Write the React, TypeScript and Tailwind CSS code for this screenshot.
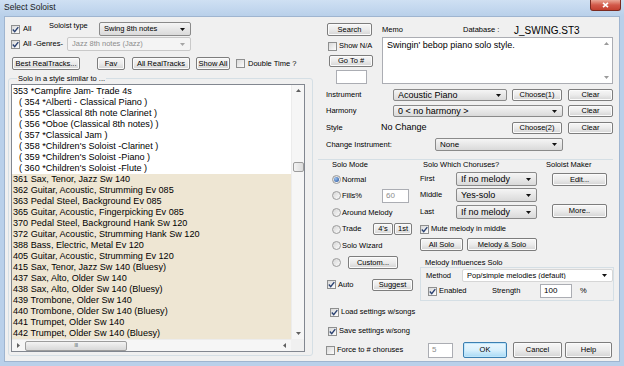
import React from 'react';

// Select Soloist dialog (Win7 look)

const Btn = ({ label, className = '', def = false }: { label: string; className?: string; def?: boolean }) => (
  <button
    type="button"
    className={`flex items-center justify-center shrink-0 rounded-[2px] border leading-none ${
      def
        ? 'border-[#3c7fb1] bg-linear-to-b from-[#eaf6fd] via-[#d9f0fc] to-[#a7d9f5] shadow-[inset_0_0_0_1px_#bfe6fb]'
        : 'border-[#7d7d7d] bg-linear-to-b from-[#f7f7f7] via-[#ebebeb] to-[#d4d4d4] shadow-[inset_0_0_0_1px_#fbfbfb]'
    } ${className}`}
  >
    {label}
  </button>
);

const Check = ({ on = false }: { on?: boolean }) => (
  <span className="w-[9px] h-[9px] shrink-0 border border-[#8e8f8f] bg-linear-to-br from-[#d9d9d9] to-[#fdfdfd] flex items-center justify-center">
    {on && (
      <svg width="7" height="7" viewBox="0 0 7 7">
        <path d="M0.8 3.5 L2.7 5.6 L6.3 1.1" fill="none" stroke="#2b4272" strokeWidth="1.4" />
      </svg>
    )}
  </span>
);

const Radio = ({ on = false }: { on?: boolean }) => (
  <span className="w-[9px] h-[9px] shrink-0 rounded-full border border-[#9c9c9c] bg-linear-to-br from-[#d6d6d6] to-[#fbfbfb] flex items-center justify-center">
    {on && <span className="w-[5px] h-[5px] rounded-full bg-[radial-gradient(circle_at_35%_35%,#9cc2ef,#1d4c98)]" />}
  </span>
);

const Arrow = ({ color = '#111' }: { color?: string }) => (
  <svg width="5" height="3" viewBox="0 0 5 3" className="shrink-0">
    <path d="M0 0 H5 L2.5 3 Z" fill={color} />
  </svg>
);

type ComboKind = 'btn' | 'white' | 'off';

const Combo = ({ text, className = '', kind = 'btn', size = 'text-[9px]' }: { text: string; className?: string; kind?: ComboKind; size?: string }) => (
  <div
    className={`flex items-center shrink-0 rounded-[2px] border pl-[4px] pr-[5px] ${
      kind === 'btn'
        ? 'border-[#8a8a8a] bg-linear-to-b from-[#f5f5f5] to-[#dadada]'
        : kind === 'white'
          ? 'border-[#d6d6d6] bg-white'
          : 'border-[#c9c9c9] bg-[#f4f4f4] text-[#8d8d8d]'
    } ${className}`}
  >
    <span className={`flex-1 truncate leading-none ${size}`}>{text}</span>
    <Arrow color={kind === 'off' ? '#a5a5a5' : '#111'} />
  </div>
);

const Field = ({ text = '', className = '', muted = false }: { text?: string; className?: string; muted?: boolean }) => (
  <div className={`shrink-0 flex items-center bg-white border border-[#abadb3] pl-[3px] text-[8px] ${muted ? 'text-[#8d8d8d]' : ''} ${className}`}>
    {text}
  </div>
);

const whiteItems = [
  '353 *Campfire Jam- Trade 4s',
  '( 354 *Alberti - Classical Piano )',
  '( 355 *Classical 8th note Clarinet )',
  '( 356 *Oboe (Classical 8th notes) )',
  '( 357 *Classical Jam )',
  "( 358 *Children's Soloist -Clarinet )",
  "( 359 *Children's Soloist -Piano )",
  "( 360 *Children's Soloist -Flute )",
];

const tanItems = [
  '361 Sax, Tenor, Jazz Sw 140',
  '362 Guitar, Acoustic, Strumming Ev 085',
  '363 Pedal Steel, Background Ev 085',
  '365 Guitar, Acoustic, Fingerpicking Ev 085',
  '370 Pedal Steel, Background Hank Sw 120',
  '372 Guitar, Acoustic, Strumming Hank Sw 120',
  '388 Bass, Electric, Metal Ev 120',
  '405 Guitar, Acoustic, Strumming Ev 120',
  '415 Sax, Tenor, Jazz Sw 140 (Bluesy)',
  '437 Sax, Alto, Older Sw 140',
  '438 Sax, Alto, Older Sw 140 (Bluesy)',
  '439 Trombone, Older Sw 140',
  '440 Trombone, Older Sw 140 (Bluesy)',
  '441 Trumpet, Older Sw 140',
  '442 Trumpet, Older Sw 140 (Bluesy)',
];

const RadioRow = ({ on = false, children }: { on?: boolean; children?: React.ReactNode }) => (
  <div className="h-[16.6px] pl-[14px] flex items-center">
    <Radio on={on} />
    {children}
  </div>
);

export default function App() {
  return (
    <div className="w-[624px] h-[366px] flex flex-col overflow-hidden bg-[#b9d0ea] font-['Liberation_Sans',Arial,sans-serif] text-[7.5px] text-black">
      {/* title bar */}
      <div className="h-[16px] shrink-0 flex items-start justify-between bg-linear-to-b from-[#cfe0f3] to-[#b9d0ea]">
        <span className="ml-[4px] mt-[3px] text-[8.5px] leading-[9px] text-[#1a1a1a]">Select Soloist</span>
        <div className="mr-[3px] w-[31px] h-[11px] rounded-b-[3px] border border-t-0 border-[#7b2a20] bg-linear-to-b from-[#e9a797] via-[#d2594a] to-[#c3402f] flex items-center justify-center">
          <svg width="7" height="6" viewBox="0 0 7 6">
            <path d="M1 0.8 L6 5.2 M6 0.8 L1 5.2" stroke="#fff" strokeWidth="1.6" />
          </svg>
        </div>
      </div>

      {/* client area */}
      <div className="flex-1 mx-[4px] mb-[4px] flex bg-[#f0f0f0] border border-[#9fb5d0]">
        {/* left column */}
        <div className="w-[310px] shrink-0 flex flex-col">
          <div className="mt-[5px] h-[14px] flex items-center">
            <div className="w-[44px] pl-[6px] flex items-center">
              <Check on />
              <span className="ml-[3px]">All</span>
            </div>
            <span className="w-[50px] self-start -mt-[1px] leading-[9px]">Soloist type</span>
            <Combo text="Swing 8th notes" className="w-[92px] h-[14px]" size="text-[7.5px]" />
          </div>
          <div className="mt-[1px] h-[14px] flex items-center">
            <div className="w-[62px] pl-[6px] flex items-center">
              <Check on />
              <span className="ml-[3px]">All -Genres-</span>
            </div>
            <Combo text="Jazz 8th notes (Jazz)" kind="off" className="w-[124px] h-[14px]" size="text-[7.5px]" />
          </div>
          <div className="mt-[6px] h-[13px] flex items-center">
            <Btn label="Best RealTracks..." className="ml-[7px] w-[68px] h-[13px]" />
            <Btn label="Fav" className="ml-[17px] w-[28px] h-[13px]" />
            <Btn label="All RealTracks" className="ml-[7px] w-[58px] h-[13px]" />
            <Btn label="Show All" className="ml-[6px] w-[34px] h-[13px]" />
            <span className="ml-[6px]"><Check /></span>
            <span className="ml-[3px]">Double Time ?</span>
          </div>

          {/* group: solo in a style similar to */}
          <div className="mt-[8px] ml-[3px] w-[305px] h-[278px] border border-[#d5dfe5] rounded-[3px]">
            <div className="-mt-[5px] ml-[8px] px-[1px] w-fit leading-[9px] bg-[#f0f0f0]">Solo in a style similar to ...</div>
            <div className="mt-[1px] ml-[2px] w-[294px] h-[268px] border border-[#828790] bg-white flex flex-col">
              <div className="h-[254px] flex">
                <div className="w-[279px] pt-[1px] text-[9.1px]">
                  {whiteItems.map((t, i) => (
                    <div key={t} className={`h-[11px] leading-[11px] whitespace-nowrap ${i === 0 ? 'pl-[1px]' : 'pl-[7px]'}`}>{t}</div>
                  ))}
                  {tanItems.map((t) => (
                    <div key={t} className="h-[11px] leading-[11px] pl-[1px] whitespace-nowrap bg-[#eee6d3]">{t}</div>
                  ))}
                </div>
                <div className="w-[13px] flex flex-col items-center bg-[#f6f6f6] border-l border-[#ececec]">
                  <div className="h-[12px] flex items-center justify-center rotate-180"><Arrow color="#606060" /></div>
                  <div className="mt-[65px] w-[11px] h-[10px] rounded-[2px] border border-[#9c9c9c] bg-linear-to-r from-[#f3f3f3] to-[#dcdcdc]" />
                  <div className="flex-1" />
                  <div className="h-[12px] flex items-center justify-center"><Arrow color="#606060" /></div>
                </div>
              </div>
              <div className="h-[12px] flex">
                <div className="w-[279px] flex items-center bg-[#f6f6f6] border-t border-[#ececec]">
                  <div className="w-[13px] flex justify-center"><span className="-rotate-90 flex"><Arrow color="#606060" /></span></div>
                  <div className="w-[102px] h-[10px] rounded-[2px] border border-[#9c9c9c] bg-linear-to-b from-[#f3f3f3] to-[#d8d8d8] flex items-center justify-center text-[6px] tracking-[-0.5px] text-[#707070]">III</div>
                  <div className="flex-1" />
                  <div className="w-[13px] flex justify-center"><span className="rotate-90 flex"><Arrow color="#606060" /></span></div>
                </div>
                <div className="flex-1 bg-[#f0f0f0]" />
              </div>
            </div>
          </div>
        </div>

        {/* right column */}
        <div className="flex-1 flex flex-col pl-[3px]">
          <div className="mt-[6px] flex items-start">
            <div className="ml-[9px] w-[46px] flex flex-col">
              <Btn label="Search" className="w-[45px] h-[13px]" />
              <div className="mt-[5px] h-[10px] flex items-center">
                <span className="ml-[1px]"><Check /></span>
                <span className="ml-[2px]">Show N/A</span>
              </div>
              <Btn label="Go To #" className="mt-[4px] ml-[2px] w-[44px] h-[12px]" />
              <Field className="mt-[3px] ml-[9px] w-[31px] h-[14px]" />
            </div>
            <div className="ml-[9px] w-[231px] flex flex-col">
              <div className="h-[14px] flex items-center">
                <span className="w-[81px]">Memo</span>
                <span className="w-[51px]">Database :</span>
                <span className="text-[10px]">J_SWING.ST3</span>
              </div>
              <div className="h-[47px] flex bg-white border border-[#abadb3]">
                <div className="flex-1 pl-[4px] pt-[2px] text-[9px] leading-[11px]">Swingin' bebop piano solo style.</div>
                <div className="w-[12px] flex flex-col items-center justify-between py-[4px]">
                  <span className="rotate-180 flex"><Arrow color="#9a9a9a" /></span>
                  <Arrow color="#9a9a9a" />
                </div>
              </div>
            </div>
          </div>

          {/* instrument rows */}
          <div className="mt-[5px] h-[12px] flex items-center">
            <span className="ml-[8px] w-[67px]">Instrument</span>
            <Combo text="Acoustic Piano" className="w-[114px] h-[12px]" />
            <Btn label="Choose(1)" className="ml-[5px] w-[50px] h-[12px]" />
            <Btn label="Clear" className="ml-[6px] w-[45px] h-[12px]" />
          </div>
          <div className="mt-[4px] h-[12px] flex items-center">
            <span className="ml-[8px] w-[67px]">Harmony</span>
            <Combo text="0 < no harmony >" className="w-[170px] h-[12px]" />
            <Btn label="Clear" className="ml-[5px] w-[45px] h-[12px]" />
          </div>
          <div className="mt-[5px] h-[12px] flex items-center">
            <span className="ml-[8px] w-[55px]">Style</span>
            <span className="w-[131px] text-[9px]">No Change</span>
            <Btn label="Choose(2)" className="w-[50px] h-[12px]" />
            <Btn label="Clear" className="ml-[6px] w-[45px] h-[12px]" />
          </div>
          <div className="mt-[4px] h-[13px] flex items-center">
            <span className="ml-[8px] w-[109px]">Change Instrument:</span>
            <Combo text="None" className="w-[128px] h-[13px]" size="text-[8px]" />
          </div>
          <div className="mt-[8px] w-[295px] h-px bg-[#d5dfe5]" />

          {/* lower section */}
          <div className="flex">
            <div className="w-[98px] flex flex-col">
              <div className="h-[10px] pl-[14px] flex items-center">Solo Mode</div>
              <div className="mt-[1px]">
                <RadioRow on><span className="ml-[1px]">Normal</span></RadioRow>
                <RadioRow>
                  <span className="ml-[1px] w-[40px]">Fills%</span>
                  <Field text="60" muted className="w-[27px] h-[14px]" />
                </RadioRow>
                <RadioRow><span className="ml-[1px]">Around Melody</span></RadioRow>
                <RadioRow>
                  <span className="ml-[1px] w-[30px]">Trade</span>
                  <Btn label="4's" className="ml-[1px] w-[20px] h-[12px]" />
                  <Btn label="1st" className="ml-[1px] w-[18px] h-[12px]" />
                </RadioRow>
                <RadioRow><span className="ml-[1px]">Solo Wizard</span></RadioRow>
                <RadioRow>
                  <Btn label="Custom..." className="ml-[7px] w-[50px] h-[13px]" />
                </RadioRow>
              </div>
              <div className="mt-[8.4px] h-[12px] pl-[9px] flex items-center">
                <Check on />
                <span className="ml-[2px] w-[34px]">Auto</span>
                <Btn label="Suggest" className="w-[41px] h-[12px]" />
              </div>
            </div>

            <div className="w-[198px] flex flex-col">
              <div className="flex">
                <div className="w-[125px] flex flex-col">
                  <div className="h-[10px] pl-[7px] flex items-center">Solo Which Choruses?</div>
                  <div className="mt-[2px] h-[14px] pl-[4px] flex items-center">
                    <span className="w-[36px]">First</span>
                    <Combo text="If no melody" className="w-[81px] h-[14px]" />
                  </div>
                  <div className="mt-[2px] h-[14px] pl-[4px] flex items-center">
                    <span className="w-[36px]">Middle</span>
                    <Combo text="Yes-solo" className="w-[81px] h-[14px]" />
                  </div>
                  <div className="mt-[3px] h-[14px] pl-[4px] flex items-center">
                    <span className="w-[36px]">Last</span>
                    <Combo text="If no melody" className="w-[81px] h-[14px]" />
                  </div>
                  <div className="mt-[5px] h-[10px] pl-[4px] flex items-center">
                    <Check on />
                    <span className="ml-[2px]">Mute melody in middle</span>
                  </div>
                  <div className="mt-[4px] h-[13px] flex items-center">
                    <Btn label="All Solo" className="ml-[4px] w-[43px] h-[13px]" />
                    <Btn label="Melody & Solo" className="ml-[4px] w-[70px] h-[13px]" />
                  </div>
                </div>
                <div className="w-[73px] flex flex-col">
                  <div className="h-[10px] pl-[5px] flex items-center">Soloist Maker</div>
                  <Btn label="Edit..." className="mt-[3px] ml-[11px] w-[55px] h-[13px]" />
                  <Btn label="More.." className="mt-[18px] ml-[11px] w-[55px] h-[14px]" />
                </div>
              </div>
              <div className="mt-[7px] h-[9px] pl-[9px] flex items-center">Melody Influences Solo</div>
              <div className="ml-[4px] w-[194px] h-[34px] border border-[#d5dfe5] flex flex-col">
                <div className="mt-[1px] h-[13px] flex items-center">
                  <span className="pl-[5px] w-[41px]">Method</span>
                  <Combo text="Pop/simple melodies (default)" kind="white" className="w-[151px] h-[13px]" size="text-[7.5px]" />
                </div>
                <div className="mt-[2px] h-[14px] pl-[7px] flex items-center">
                  <Check on />
                  <span className="ml-[2px] w-[53px]">Enabled</span>
                  <span className="w-[48px]">Strength</span>
                  <Field text="100" className="w-[32px] h-[14px]" />
                  <span className="ml-[8px]">%</span>
                </div>
              </div>
            </div>
          </div>

          <div className="mt-[6px] h-[10px] pl-[12px] flex items-center">
            <Check on />
            <span className="ml-[2px]">Load settings w/songs</span>
          </div>
          <div className="mt-[9px] h-[10px] pl-[10px] flex items-center">
            <Check on />
            <span className="ml-[2px]">Save settings w/song</span>
          </div>
          <div className="mt-[6px] h-[16px] pl-[8px] flex items-center">
            <Check />
            <span className="ml-[2px] w-[91px]">Force to # choruses</span>
            <Field text="5" muted className="w-[25px] h-[15px]" />
            <Btn label="OK" def className="ml-[10px] w-[44px] h-[16px]" />
            <Btn label="Cancel" className="ml-[6px] w-[49px] h-[16px]" />
            <Btn label="Help" className="ml-[3px] w-[47px] h-[16px]" />
          </div>
        </div>
      </div>
    </div>
  );
}
